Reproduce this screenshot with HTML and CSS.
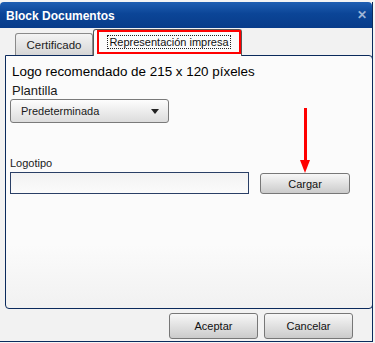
FILE: index.html
```html
<!DOCTYPE html>
<html lang="es">
<head>
    <meta charset="UTF-8">
    <meta name="viewport" content="width=device-width, initial-scale=1.0">
    <title>Block Documentos</title>
    <link rel="stylesheet" href="styles.css">
</head>
<body>
    <div class="dialog">
        <div class="titlebar">
            <span class="title">Block Documentos</span>
            <span class="close">&#x2715;</span>
        </div>
        <div class="tabs">
            <div class="tab">Certificado</div>
            <div class="tab active">
                <span class="mark"><span class="focus">Representación impresa</span></span>
            </div>
        </div>
        <div class="panel">
            <h2>Logo recomendado de 215 x 120 píxeles</h2>
            <div class="label-big">Plantilla</div>
            <div class="select">
                <span>Predeterminada</span>
                <span class="caret"></span>
            </div>
            <div class="label">Logotipo</div>
            <div class="file-row">
                <div class="input"></div>
                <div class="upload">
                    <div class="arrow">
                        <div class="arrow-line"></div>
                        <div class="arrow-head"></div>
                    </div>
                    <button class="btn">Cargar</button>
                </div>
            </div>
        </div>
        <div class="footer">
            <button class="btn big">Aceptar</button>
            <button class="btn big">Cancelar</button>
        </div>
    </div>
</body>
</html>
```

FILE: styles.css
```css
body {
    font-family: "Liberation Sans", Arial, sans-serif;
    margin: 0;
    padding: 0;
    background-color: #f4f4f4;
    color: #1a1a1a;
}
.dialog {
    width: 372px;
    height: 339px;
    margin-top: 2px;
    background-color: #f2f2f2;
    border-right: 1px solid #0b2a5c;
    border-bottom: 1px solid #0b2a5c;
    display: flex;
    flex-direction: column;
}
.titlebar {
    height: 26px;
    background: linear-gradient(#1f5fb3, #0b4597 45%, #083c8a);
    border-radius: 4px 4px 0 0;
    display: flex;
    align-items: center;
    justify-content: space-between;
    padding: 0 5px 0 6px;
    color: #fff;
}
.title {
    font-size: 12px;
    font-weight: bold;
    margin-top: 1px;
}
.close {
    color: #9fb5d6;
    font-size: 12px;
    font-weight: bold;
}
.tabs {
    display: flex;
    align-items: flex-end;
    height: 27px;
    padding-left: 15px;
    position: relative;
    z-index: 1;
}
.tab {
    width: 76px;
    height: 21px;
    border: 1px solid #8a8a8a;
    border-bottom: none;
    border-radius: 3px 3px 0 0;
    background: linear-gradient(#f4f4f4, #d6d6d6);
    font-size: 11.5px;
    color: #222;
    text-align: center;
    line-height: 22px;
}
.tab.active {
    width: 147px;
    height: 26px;
    margin-bottom: -1px;
    background: #fbfbfb;
    border-color: #555;
    text-align: left;
    line-height: normal;
}
.mark {
    display: flex;
    align-items: center;
    justify-content: center;
    width: 140px;
    height: 20px;
    margin-left: 3px;
    border: 2px solid #ff0000;
}
.focus {
    border: 1px dotted #222;
    padding: 0 1px;
    font-size: 11px;
    color: #111;
}
.panel {
    height: 252px;
    margin-left: 5px;
    width: 358px;
    border: 1px solid #0b2a5c;
    border-radius: 0 4px 4px 4px;
    background: linear-gradient(#fbfbfb 75%, #f1f1f1);
    padding: 0 4px;
    box-sizing: content-box;
}
.panel h2 {
    font-size: 13.4px;
    font-weight: normal;
    margin: 8px 0 0 2px;
    color: #000;
}
.label-big {
    font-size: 13px;
    margin: 4px 0 0 2px;
}
.select {
    width: 159px;
    height: 24px;
    margin-top: 1px;
    border: 1px solid #7a7a7a;
    border-radius: 3px;
    background: linear-gradient(#fdfdfd, #dcdcdc);
    display: flex;
    align-items: center;
    justify-content: space-between;
    padding: 0 9px 0 10px;
    box-sizing: border-box;
    font-size: 11px;
}
.caret {
    border-left: 4px solid transparent;
    border-right: 4px solid transparent;
    border-top: 5px solid #222;
}
.label {
    font-size: 11px;
    margin-top: 34px;
}
.file-row {
    display: flex;
    align-items: flex-end;
    gap: 11px;
    margin-top: 3px;
}
.input {
    width: 239px;
    height: 22px;
    border: 1px solid #2a3f66;
    background: linear-gradient(#f2f2f2, #fbfbfb);
    box-sizing: border-box;
}
.upload {
    display: flex;
    flex-direction: column;
    align-items: center;
    position: relative;
}
.arrow {
    position: absolute;
    left: 40px;
    bottom: 21px;
    display: flex;
    flex-direction: column;
    align-items: center;
}
.arrow-line {
    width: 3px;
    height: 52px;
    background: #ff0000;
}
.arrow-head {
    border-left: 5px solid transparent;
    border-right: 5px solid transparent;
    border-top: 13px solid #ff0000;
}
.btn {
    width: 90px;
    height: 21px;
    border: 1px solid #777;
    border-radius: 3px;
    background: linear-gradient(#f7f7f7, #cbcbcb);
    font-family: "Liberation Sans", Arial, sans-serif;
    font-size: 11px;
    color: #111;
    padding: 0;
}
.footer {
    display: flex;
    justify-content: flex-end;
    gap: 6px;
    padding: 4px 19px 0 0;
}
.btn.big {
    width: 89px;
    height: 26px;
}
```
